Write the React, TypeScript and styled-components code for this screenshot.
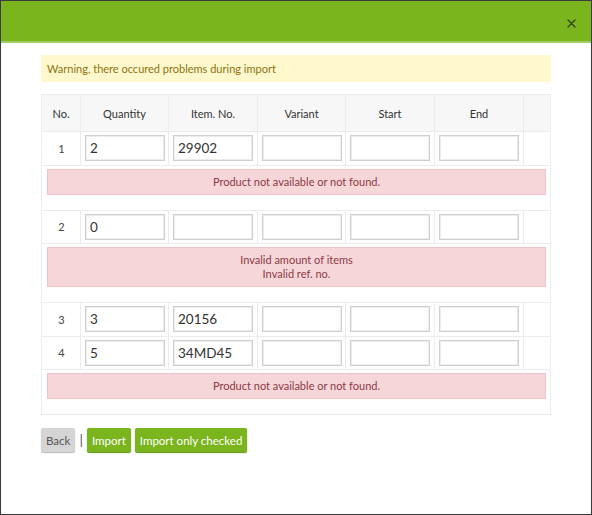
import React from 'react';
import styled, { createGlobalStyle } from 'styled-components';

const GlobalStyle = createGlobalStyle`
  html, body {
    margin: 0;
    padding: 0;
    background: #fff;
  }
  * {
    box-sizing: border-box;
  }
`;

const Modal = styled.section`
  width: 592px;
  height: 515px;
  border: 1px solid #3a3a3a;
  background: #fff;
  font-family: Lato, "Open Sans", sans-serif;
  display: flex;
  flex-direction: column;
`;

const Header = styled.header`
  height: 42px;
  background: #7ab51d;
  border-bottom: 2px solid #a4cc62;
  display: flex;
  justify-content: flex-end;
  align-items: center;
  padding: 4px 13px 0 0;
`;

const CloseButton = styled.button`
  width: 14px;
  height: 14px;
  padding: 0;
  border: none;
  background: transparent;
  display: flex;
  align-items: center;
  justify-content: center;
  cursor: pointer;
`;

const Body = styled.div`
  padding: 12px 40px 0 40px;
  display: flex;
  flex-direction: column;
`;

const Warning = styled.div`
  height: 27px;
  background: #fff8cc;
  color: #8a7412;
  font-size: 11px;
  display: flex;
  align-items: center;
  padding: 0 6px;
  margin-bottom: 12px;
`;

const Table = styled.table`
  width: 509px;
  border-collapse: collapse;
  border: 1px solid #e8e8e8;
  table-layout: fixed;
`;

const HeadCell = styled.th<{ $width: number }>`
  width: ${p => p.$width}px;
  height: 37px;
  background: #f7f7f7;
  border: 1px solid #ececec;
  font-size: 11px;
  font-weight: 400;
  color: #333;
  text-align: center;
`;

const Cell = styled.td<{ $center?: boolean }>`
  height: 33.5px;
  border: 1px solid #ececec;
  padding: 3px 3px 3px 4px;
  font-size: 11px;
  color: #444;
  text-align: ${p => (p.$center ? 'center' : 'left')};
`;

const Field = styled.input`
  width: 80px;
  height: 26px;
  border: 1px solid #cfcfcf;
  box-shadow: inset 0 0 0 1px #ececec;
  padding: 0 4px;
  font-family: Lato, "Open Sans", sans-serif;
  font-size: 13.5px;
  color: #333;
  outline: none;
  display: block;
`;

const ErrorCell = styled.td`
  padding: 3px 4px 15px 5px;
  border-left: 1px solid #ececec;
  border-right: 1px solid #ececec;
`;

const ErrorBox = styled.div`
  background: #f7d6da;
  border: 1px solid #f2c2c8;
  color: #8e3a44;
  font-size: 11px;
  text-align: center;
  line-height: 14px;
  padding: 5px 0;
  min-height: 26px;
`;

const Actions = styled.div`
  display: flex;
  align-items: center;
  gap: 4px;
  margin-top: 13px;
`;

const Button = styled.button<{ $variant: 'default' | 'primary' }>`
  height: 24px;
  padding: 0 5px;
  border: none;
  border-radius: 2px;
  font-family: Lato, "Open Sans", sans-serif;
  font-size: 11.5px;
  cursor: pointer;
  background: ${p => (p.$variant === 'primary' ? '#7ab51d' : '#d5d5d5')};
  color: ${p => (p.$variant === 'primary' ? '#fff' : '#555')};
  box-shadow: 0 1px 1px ${p => (p.$variant === 'primary' ? '#5f8f14' : '#b8b8b8')};
`;

const Separator = styled.span`
  color: #555;
  font-size: 14px;
  margin: 0 0 2px 0;
`;

type Row = {
  no: number;
  quantity: string;
  item: string;
  errors?: string[];
};

const rows: Row[] = [
  { no: 1, quantity: '2', item: '29902', errors: ['Product not available or not found.'] },
  { no: 2, quantity: '0', item: '', errors: ['Invalid amount of items', 'Invalid ref. no.'] },
  { no: 3, quantity: '3', item: '20156' },
  { no: 4, quantity: '5', item: '34MD45', errors: ['Product not available or not found.'] },
];

const columns = [
  { label: 'No.', width: 39 },
  { label: 'Quantity', width: 88 },
  { label: 'Item. No.', width: 89 },
  { label: 'Variant', width: 88 },
  { label: 'Start', width: 89 },
  { label: 'End', width: 89 },
  { label: '', width: 27 },
];

function App() {
  return (
    <Modal>
      <GlobalStyle />
      <Header>
        <CloseButton aria-label="Close">
          <svg width="9" height="9" viewBox="0 0 9 9">
            <path d="M1 1 L8 8 M8 1 L1 8" stroke="#2e4a10" strokeWidth="1.4" strokeLinecap="round" />
          </svg>
        </CloseButton>
      </Header>
      <Body>
        <Warning>Warning, there occured problems during import</Warning>
        <Table>
          <thead>
            <tr>
              {columns.map((col, i) => (
                <HeadCell key={i} $width={col.width}>{col.label}</HeadCell>
              ))}
            </tr>
          </thead>
          <tbody>
            {rows.map(row => (
              <React.Fragment key={row.no}>
                <tr>
                  <Cell $center>{row.no}</Cell>
                  <Cell><Field defaultValue={row.quantity} /></Cell>
                  <Cell><Field defaultValue={row.item} /></Cell>
                  <Cell><Field /></Cell>
                  <Cell><Field /></Cell>
                  <Cell><Field /></Cell>
                  <Cell />
                </tr>
                {row.errors && (
                  <tr>
                    <ErrorCell colSpan={7}>
                      <ErrorBox>
                        {row.errors.map(err => <div key={err}>{err}</div>)}
                      </ErrorBox>
                    </ErrorCell>
                  </tr>
                )}
              </React.Fragment>
            ))}
          </tbody>
        </Table>
        <Actions>
          <Button $variant="default">Back</Button>
          <Separator>|</Separator>
          <Button $variant="primary">Import</Button>
          <Button $variant="primary">Import only checked</Button>
        </Actions>
      </Body>
    </Modal>
  );
}

export default App;
